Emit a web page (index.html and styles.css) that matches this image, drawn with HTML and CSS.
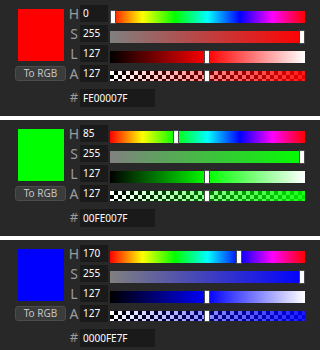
FILE: index.html
```html
<!DOCTYPE html>
<html>
	<head>
		<meta charset="utf-8" />
		<title>HSL picker</title>
		<link rel="stylesheet" href="styles.css">
	</head>
	<body>
		<div class="picker">
			<div class="swatch" style="background-color: #ff0000;"></div>
			<div class="to-rgb">To RGB</div>

			<span class="lbl row-1">H</span>
			<div class="num row-1">0</div>
			<div class="slider hue row-1"><i class="knob" style="left: 0px;"></i></div>

			<span class="lbl row-2">S</span>
			<div class="num row-2">255</div>
			<div class="slider row-2" style="background: linear-gradient(to right, #808080, #ff0000);"><i class="knob" style="left: 189px;"></i></div>

			<span class="lbl row-3">L</span>
			<div class="num row-3">127</div>
			<div class="slider row-3" style="background: linear-gradient(to right, #000, #ff0000, #fff);"><i class="knob" style="left: 94px;"></i></div>

			<span class="lbl row-4">A</span>
			<div class="num row-4">127</div>
			<div class="slider alpha row-4"><div class="fill" style="background: linear-gradient(to right, rgba(255,0,0,0), rgba(255,0,0,0.9));"></div><i class="knob" style="left: 94px;"></i></div>

			<span class="lbl row-5">#</span>
			<div class="num hex row-5">FE00007F</div>
		</div>

		<div class="picker">
			<div class="swatch" style="background-color: #00ff00;"></div>
			<div class="to-rgb">To RGB</div>

			<span class="lbl row-1">H</span>
			<div class="num row-1">85</div>
			<div class="slider hue row-1"><i class="knob" style="left: 63px;"></i></div>

			<span class="lbl row-2">S</span>
			<div class="num row-2">255</div>
			<div class="slider row-2" style="background: linear-gradient(to right, #808080, #00ff00);"><i class="knob" style="left: 189px;"></i></div>

			<span class="lbl row-3">L</span>
			<div class="num row-3">127</div>
			<div class="slider row-3" style="background: linear-gradient(to right, #000, #00ff00, #fff);"><i class="knob" style="left: 94px;"></i></div>

			<span class="lbl row-4">A</span>
			<div class="num row-4">127</div>
			<div class="slider alpha row-4"><div class="fill" style="background: linear-gradient(to right, rgba(0,255,0,0), rgba(0,255,0,0.9));"></div><i class="knob" style="left: 94px;"></i></div>

			<span class="lbl row-5">#</span>
			<div class="num hex row-5">00FE007F</div>
		</div>

		<div class="picker">
			<div class="swatch" style="background-color: #0000ff;"></div>
			<div class="to-rgb">To RGB</div>

			<span class="lbl row-1">H</span>
			<div class="num row-1">170</div>
			<div class="slider hue row-1"><i class="knob" style="left: 126px;"></i></div>

			<span class="lbl row-2">S</span>
			<div class="num row-2">255</div>
			<div class="slider row-2" style="background: linear-gradient(to right, #808080, #0000ff);"><i class="knob" style="left: 189px;"></i></div>

			<span class="lbl row-3">L</span>
			<div class="num row-3">127</div>
			<div class="slider row-3" style="background: linear-gradient(to right, #000, #0000ff, #fff);"><i class="knob" style="left: 94px;"></i></div>

			<span class="lbl row-4">A</span>
			<div class="num row-4">127</div>
			<div class="slider alpha row-4"><div class="fill" style="background: linear-gradient(to right, rgba(0,0,255,0), rgba(0,0,255,0.9));"></div><i class="knob" style="left: 94px;"></i></div>

			<span class="lbl row-5">#</span>
			<div class="num hex row-5">0000FE7F</div>
		</div>
	</body>
</html>
```

FILE: styles.css
```css
body{
	margin: 0;
	background-color: #ffffff;
	font-family: "Noto Sans", "Open Sans", sans-serif;
}

.picker{
	height: 116px;
	margin-bottom: 4px;
	background-color: #282828;
	padding: 5px 0 0 15px;
	box-sizing: border-box;
	display: grid;
	grid-template-columns: 51px 14px 30px 195px;
	grid-template-rows: 20px 20px 20px 20px 24px;
	align-items: start;
}

.row-1{ grid-row: 1; }
.row-2{ grid-row: 2; }
.row-3{ grid-row: 3; }
.row-4{ grid-row: 4; }
.row-5{ grid-row: 5; }

.swatch{
	grid-column: 1;
	grid-row: 1 / 4;
	margin: 4px 2px 0 3px;
	height: 52px;
}

.to-rgb{
	grid-column: 1;
	grid-row: 4;
	margin-top: 1px;
	height: 15px;
	line-height: 13px;
	box-sizing: border-box;
	background-color: #3b3b3b;
	border: 1px solid #4c4c4c;
	border-radius: 3px;
	color: #c4c4c4;
	font-size: 10px;
	text-align: center;
}

.lbl{
	grid-column: 2;
	color: #9c9c9c;
	font-size: 14px;
	line-height: 17px;
	text-align: center;
	padding-left: 2px;
}

.row-5.lbl{
	margin-top: 4px;
	font-size: 13px;
}

.num{
	grid-column: 3;
	width: 28px;
	height: 17px;
	line-height: 17px;
	padding-left: 3px;
	box-sizing: border-box;
	background-color: #1a1a1a;
	color: #ffffff;
	font-size: 10px;
}

.num.hex{
	grid-column: 3 / 5;
	width: 75px;
	height: 18px;
	line-height: 18px;
	margin-top: 4px;
}

.slider{
	grid-column: 4;
	position: relative;
	height: 12px;
	margin-top: 6px;
}

.hue{
	background: linear-gradient(to right, #ff0000, #ffff00 16.66%, #00ff00 33.33%, #00ffff 50%, #0000ff 66.66%, #ff00ff 83.33%, #ff0000);
}

.alpha{
	height: 10px;
	background-color: #ffffff;
	background-image:
		linear-gradient(45deg, #000 25%, transparent 25%, transparent 75%, #000 75%),
		linear-gradient(45deg, #000 25%, transparent 25%, transparent 75%, #000 75%);
	background-size: 8px 8px;
	background-position: 0 0, 4px 4px;
}

.alpha .fill{
	height: 100%;
}

.knob{
	position: absolute;
	top: -1px;
	width: 6px;
	height: 14px;
	box-sizing: border-box;
	background-color: #ffffff;
	border: 1px solid #4a4a4a;
}

.alpha .knob{
	height: 12px;
}
```
